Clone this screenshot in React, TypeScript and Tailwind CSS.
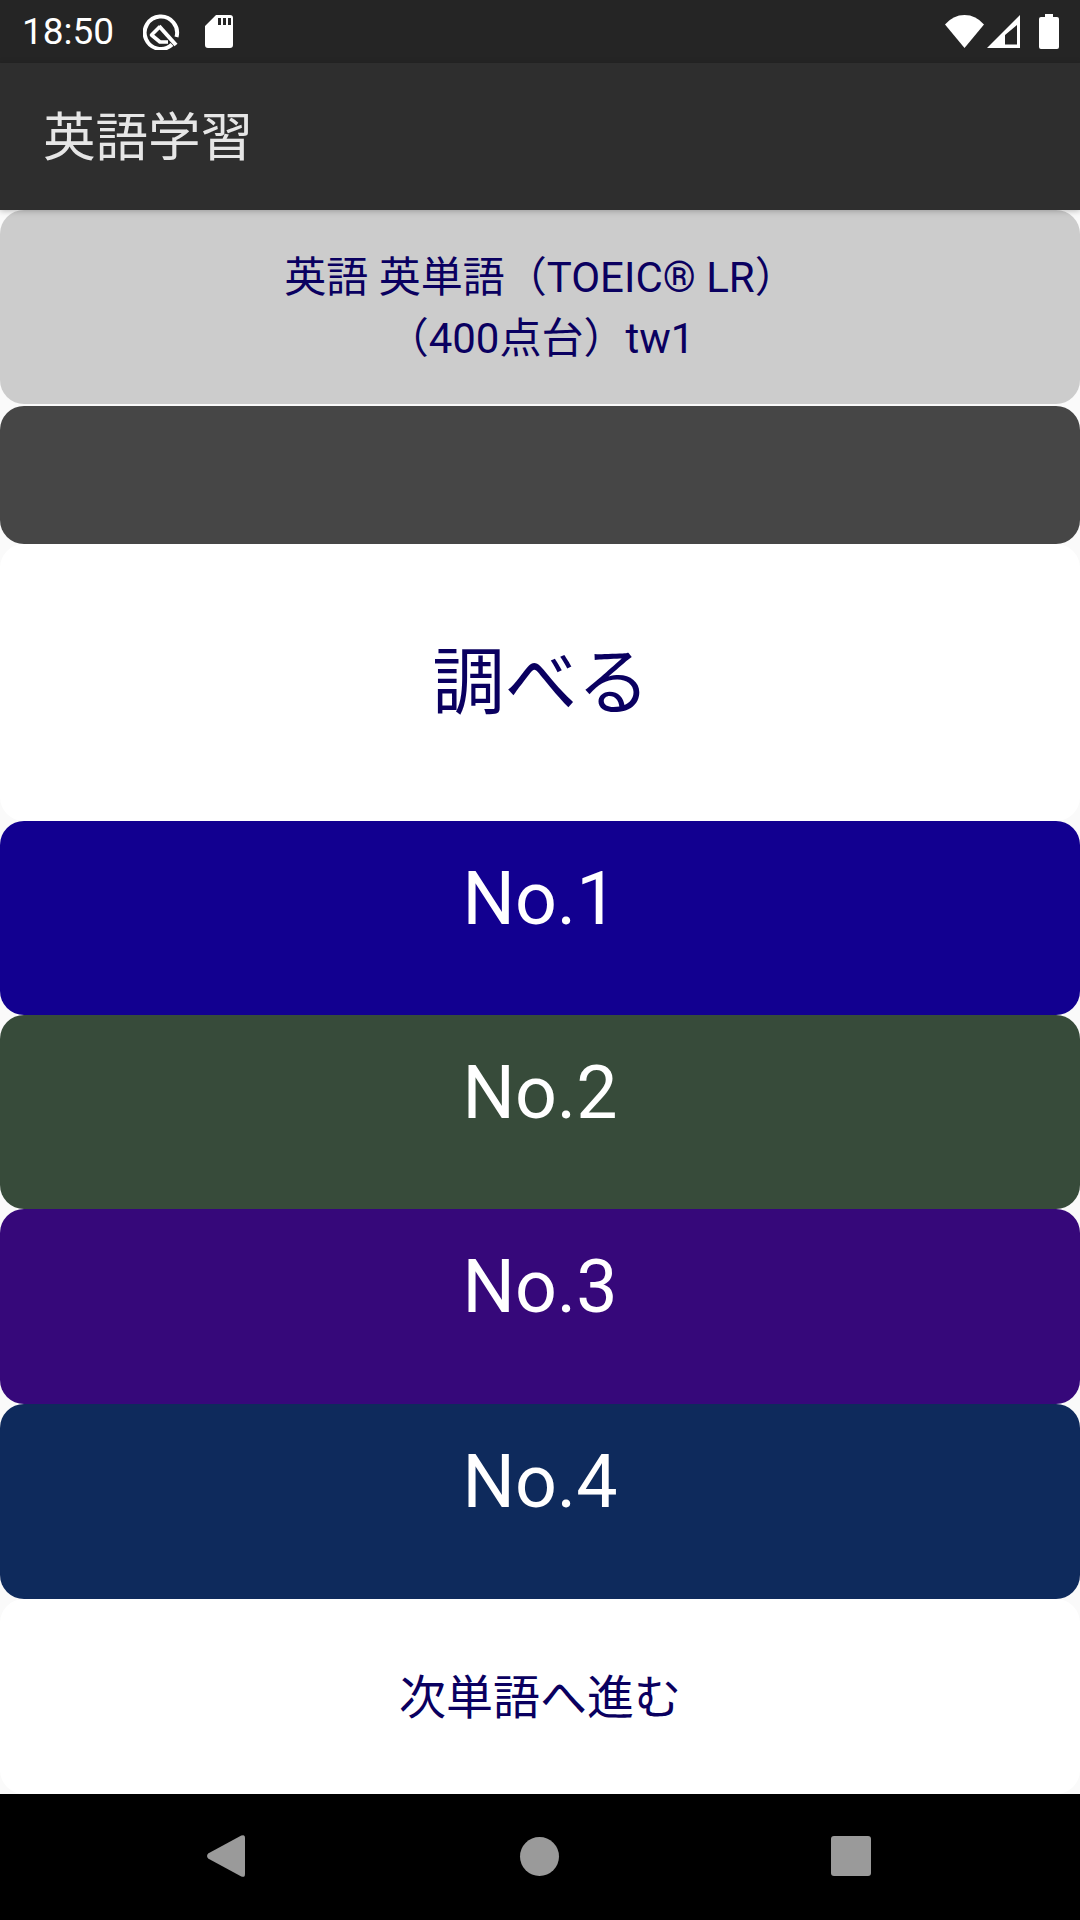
const font = "font-['Roboto','Noto_Sans_CJK_JP',sans-serif]";

const answers = [
  { label: "No.1", bg: "bg-[#120090]", h: "h-[194px]" },
  { label: "No.2", bg: "bg-[#374b3a]", h: "h-[194px]" },
  { label: "No.3", bg: "bg-[#36087a]", h: "h-[195px]" },
  { label: "No.4", bg: "bg-[#0e2a5c]", h: "h-[195px]" },
];

function StatusBar() {
  return (
    <div className="flex h-[63px] shrink-0 items-center bg-[#252525] pl-[22px] pr-[21px] text-white">
      <span className="w-[90px] text-[37px] leading-none">18:50</span>
      {/* Q badge */}
      <svg viewBox="0 0 37 37" className="ml-[31px] size-[37px]" fill="none" stroke="white">
        <path d="M29 31.5A16.2 16.2 0 1 1 33.5 24" strokeWidth="4" />
        <path d="M17 13.5L8.5 22L17 29H25" strokeWidth="3.6" strokeLinejoin="round" />
        <path d="M16 13L33 32" strokeWidth="4" />
      </svg>
      {/* SD card */}
      <svg viewBox="0 0 28 33" className="ml-[25px] h-[33px] w-[28px]" fill="white">
        <path
          fillRule="evenodd"
          d="M11 0H25Q28 0 28 3V30Q28 33 25 33H3Q0 33 0 30V11ZM13 3V10H16V3ZM18 3V10H21V3ZM23 3V10H26V3Z"
        />
      </svg>
      <div className="flex-1" />
      {/* wifi */}
      <svg viewBox="0 0 39 33" className="h-[33px] w-[39px]" fill="white">
        <path d="M19.5 33L0 9.5Q8 0 19.5 0T39 9.5Z" />
      </svg>
      {/* signal */}
      <svg viewBox="0 0 33 33" className="ml-[3px] h-[33px] w-[33px]" fill="white">
        <path fillRule="evenodd" d="M33 0V33H0ZM30 10L18 20V29.5H30Z" />
      </svg>
      {/* battery */}
      <svg viewBox="0 0 20 35" className="ml-[19px] h-[35px] w-[20px]" fill="white">
        <path d="M6 0H14V3H18Q20 3 20 5V33Q20 35 18 35H2Q0 35 0 33V5Q0 3 2 3H6Z" />
      </svg>
    </div>
  );
}

function NavBar() {
  return (
    <div className="flex h-[126px] shrink-0 items-center bg-black pb-[2px] pl-[206px] pr-[209px]">
      <svg viewBox="0 0 37 42" preserveAspectRatio="none" className="h-[42px] w-[39px]" fill="#9a9a9a">
        <path d="M33.5 0.6Q37 -1 37 3V39Q37 43 33.5 41.4L2 23.5Q0 21 2 18.5Z" />
      </svg>
      <div className="ml-[275px] size-[39px] rounded-full bg-[#9a9a9a]" />
      <div className="ml-auto h-[40px] w-[40px] rounded-[3px] bg-[#9a9a9a]" />
    </div>
  );
}

export default function App() {
  return (
    <div className={`flex h-[1920px] w-[1080px] flex-col overflow-hidden bg-[#fafafa] ${font}`}>
      <StatusBar />

      {/* App bar */}
      <header className="relative z-10 flex h-[147px] shrink-0 items-center bg-[#2e2e2e] pl-[43px] pt-[3px] shadow-[0_1px_6px_rgba(0,0,0,0.25)]">
        <h1 className="text-[52.5px] font-normal leading-none text-[#e6e6e6]">英語学習</h1>
      </header>

      {/* Word */}
      <div className="flex h-[194px] shrink-0 flex-col items-center justify-center rounded-[24px] bg-[#cccccc] pl-[1px] pt-[2px] text-[42px] leading-[61px] text-[#0a0060]">
        <p>英語 英単語（TOEIC® LR）</p>
        <p>（400点台）tw1</p>
      </div>
      <div className="mt-[2px] h-[138px] shrink-0 rounded-[24px] bg-[#464646]" />

      {/* Lookup */}
      <button className="flex h-[277px] shrink-0 items-center justify-center rounded-[24px] bg-white pl-[2px] pt-[4px] text-[72.5px] leading-none text-[#0a0060]">
        調べる
      </button>

      {/* Choices */}
      {answers.map((a) => (
        <button
          key={a.label}
          className={`flex shrink-0 justify-center rounded-[24px] pt-[38px] text-[73.5px] leading-[80px] text-white ${a.h} ${a.bg}`}
        >
          {a.label}
        </button>
      ))}

      {/* Next */}
      <button className="flex h-[195px] shrink-0 items-center justify-center rounded-[24px] bg-white pt-[2px] text-[47px] leading-none text-[#0a0060]">
        次単語へ進む
      </button>

      <NavBar />
    </div>
  );
}
